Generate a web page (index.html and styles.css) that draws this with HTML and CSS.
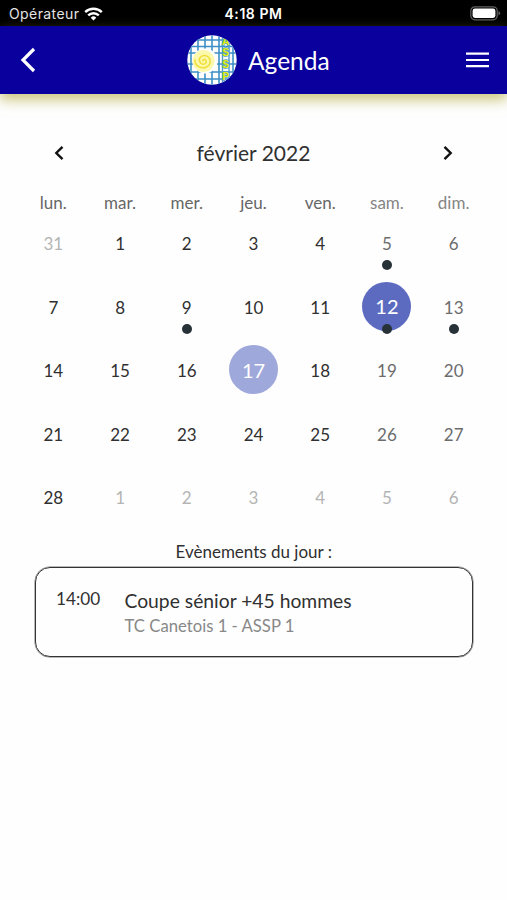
FILE: index.html
```html
<!DOCTYPE html>
<html lang="fr">
<head>
    <meta charset="UTF-8">
    <meta name="viewport" content="width=device-width, initial-scale=1.0">
    <title>Agenda</title>
    <link rel="stylesheet" href="styles.css">
</head>
<body>
    <!-- Status bar -->
    <div class="status-bar">
        <div class="carrier">
            <span>Opérateur</span>
            <svg class="wifi" width="19" height="14" viewBox="0 0 19 14" fill="none" stroke="#fff" stroke-width="2.4">
                <path d="M1.2 5.2a11.8 11.8 0 0 1 16.6 0"/>
                <path d="M4.2 8.4a7.5 7.5 0 0 1 10.6 0"/>
                <path d="M9.5 13.6l-2.8-2.9a4 4 0 0 1 5.6 0z" fill="#fff" stroke="none"/>
            </svg>
        </div>
        <span class="clock">4:18 PM</span>
        <svg class="battery" width="31" height="15" viewBox="0 0 31 15">
            <rect x="0.8" y="0.8" width="26.4" height="13" rx="4" fill="none" stroke="#626262" stroke-width="1.2"/>
            <rect x="2.6" y="2.6" width="22.8" height="9.4" rx="2.4" fill="#fff"/>
            <path d="M28.5 5v4.6q1.7-.8 1.7-2.3T28.5 5z" fill="#626262"/>
        </svg>
    </div>

    <!-- Header -->
    <div class="header">
        <svg class="back" width="16" height="26" viewBox="0 0 16 26" fill="none" stroke="#fff" stroke-width="3.2">
            <path d="M14 2L3 13l11 11"/>
        </svg>
        <div class="brand">
            <svg width="50" height="50" viewBox="0 0 50 50">
                <defs>
                    <clipPath id="round"><circle cx="25" cy="25" r="24.7"/></clipPath>
                </defs>
                <g clip-path="url(#round)">
                    <rect width="50" height="50" fill="#fff"/>
                    <path d="M4 0v50M11 0v50M18 0v50M25 0v50M32 0v50M46 0v50M0 5h50M0 11.500h50M0 18h50M0 29h50M0 37h50M0 44h50" stroke="#3d8fc6" stroke-width="1.6"/>
                    <circle cx="18" cy="26" r="12.5" fill="#fff"/>
                    <circle cx="16.5" cy="26" r="11" fill="#fcf8ae"/>
                    <path d="M16 26.500c-1-2 2-3 3-1 1.500 3-3 5-5.500 2.500-3-3.500 0-8 4.500-7.500 6 1 7 9 1.500 11.500-6 2.500-12-1.500-11.500-7.500" fill="none" stroke="#f0df38" stroke-width="1.5"/>
                    <path d="M35.500 0v50M42 0v50" stroke="#4f9cc4" stroke-width="1.4"/>
                    <g class="logo-text">
                        <text x="38.800" y="9.500">A</text>
                        <text x="38.800" y="21.300">S</text>
                        <text x="38.800" y="33.300">S</text>
                        <text x="38.800" y="45.300">P</text>
                    </g>
                </g>
            </svg>
            <span class="title">Agenda</span>
        </div>
        <svg class="menu" width="23" height="16" viewBox="0 0 23 16" stroke="#fff" stroke-width="2.2">
            <path d="M0 1.700h23M0 8h23M0 14.200h23"/>
        </svg>
    </div>

    <!-- Calendar -->
    <div class="calendar">
        <div class="month">
            <svg width="10" height="16" viewBox="0 0 10 16" fill="none" stroke="#111" stroke-width="2.4">
                <path d="M8.5 1.8L2.3 8l6.200 6.200"/>
            </svg>
            <span>février 2022</span>
            <svg width="10" height="16" viewBox="0 0 10 16" fill="none" stroke="#111" stroke-width="2.4">
                <path d="M1.5 1.8L7.700 8l-6.200 6.200"/>
            </svg>
        </div>
        <div class="weekdays">
            <span>lun.</span>
            <span>mar.</span>
            <span>mer.</span>
            <span>jeu.</span>
            <span>ven.</span>
            <span class="light">sam.</span>
            <span class="light">dim.</span>
        </div>
        <div class="days">
            <div class="day outside">31</div>
            <div class="day">1</div>
            <div class="day">2</div>
            <div class="day">3</div>
            <div class="day">4</div>
            <div class="day weekend event">5</div>
            <div class="day weekend">6</div>

            <div class="day">7</div>
            <div class="day">8</div>
            <div class="day event">9</div>
            <div class="day">10</div>
            <div class="day">11</div>
            <div class="day event"><span class="circle selected">12</span></div>
            <div class="day weekend event">13</div>

            <div class="day">14</div>
            <div class="day">15</div>
            <div class="day">16</div>
            <div class="day"><span class="circle today">17</span></div>
            <div class="day">18</div>
            <div class="day weekend">19</div>
            <div class="day weekend">20</div>

            <div class="day">21</div>
            <div class="day">22</div>
            <div class="day">23</div>
            <div class="day">24</div>
            <div class="day">25</div>
            <div class="day weekend">26</div>
            <div class="day weekend">27</div>

            <div class="day">28</div>
            <div class="day outside">1</div>
            <div class="day outside">2</div>
            <div class="day outside">3</div>
            <div class="day outside">4</div>
            <div class="day outside">5</div>
            <div class="day outside">6</div>
        </div>
    </div>

    <!-- Events -->
    <div class="events">
        <div class="events-title">Evènements du jour :</div>
        <div class="event-card">
            <span class="event-time">14:00</span>
            <div class="event-info">
                <div class="event-name">Coupe sénior +45 hommes</div>
                <div class="event-teams">TC Canetois 1 - ASSP 1</div>
            </div>
        </div>
    </div>
</body>
</html>
```
FILE: styles.css
```css
* {
    box-sizing: border-box;
}
body {
    margin: 0;
    height: 900px;
    background-color: #fefefe;
    color: #303030;
    font-family: Lato, sans-serif;
    overflow: hidden;
}
svg {
    display: block;
}
.status-bar {
    display: grid;
    grid-template-columns: 1fr auto 1fr;
    align-items: center;
    height: 26px;
    padding: 1px 6px 0 9px;
    background-color: #000;
    color: #fff;
    font-family: Inter, sans-serif;
    font-size: 14px;
}
.carrier {
    display: flex;
    align-items: center;
    gap: 5px;
    color: #e4e4e4;
    letter-spacing: 0.4px;
}
.clock {
    margin-right: 3px;
    font-weight: 600;
    letter-spacing: 0.55px;
}
.battery {
    justify-self: end;
}
.header {
    display: flex;
    align-items: center;
    height: 68px;
    padding: 0 18px 0 20px;
    background-color: #0a009e;
    box-shadow: 0 6px 12px rgba(180, 170, 60, 0.65);
}
.brand {
    display: flex;
    align-items: center;
    gap: 11px;
    margin-left: 151px;
}
.menu {
    margin-left: auto;
}
.title {
    color: #fff;
    font-size: 24.5px;
    line-height: 30px;
    padding-top: 1px;
}
.logo-text {
    font-family: "Liberation Sans", sans-serif;
    font-size: 10.3px;
    font-weight: bold;
    fill: #e6f000;
    stroke: #4f9cc4;
    stroke-width: 1.6px;
    paint-order: stroke;
    text-anchor: middle;
}
.calendar {
    padding: 42px 20px 0;
}
.month {
    display: flex;
    align-items: center;
    justify-content: space-between;
    height: 33px;
    padding: 0 34px;
    font-size: 21px;
}
.weekdays {
    display: grid;
    grid-template-columns: repeat(7, 1fr);
    margin-top: 24px;
    height: 18px;
    line-height: 20px;
    font-size: 17px;
    text-align: center;
    color: #666;
}
.light {
    color: #858585;
}
.days {
    display: grid;
    grid-template-columns: repeat(7, 1fr);
    grid-auto-rows: 63.5px;
}
.day {
    position: relative;
    display: flex;
    align-items: center;
    justify-content: center;
    padding-top: 1.5px;
    font-size: 17px;
}
.weekend {
    color: #6c6c6c;
}
.outside {
    color: #b4b4b4;
}
.circle {
    display: flex;
    align-items: center;
    justify-content: center;
    width: 49px;
    height: 49px;
    margin-top: -1.5px;
    border-radius: 50%;
    color: #fff;
    font-size: 20px;
}
.selected {
    background-color: #5c6bc0;
}
.today {
    background-color: #9fa8da;
}
.event::after {
    content: "";
    position: absolute;
    left: 50%;
    bottom: 4.5px;
    width: 10px;
    height: 10px;
    margin-left: -5px;
    border-radius: 50%;
    background-color: #263238;
}
.events {
    padding: 11px 34.5px 0 35px;
}
.events-title {
    line-height: 24px;
    font-size: 17px;
    text-align: center;
}
.event-card {
    display: flex;
    height: 90px;
    margin-top: 3px;
    padding: 19.5px 20px;
    border: 1px solid #333;
    border-radius: 15px;
    box-shadow: 0 0 0 0.5px #777;
}
.event-time {
    width: 68.5px;
    font-size: 17.2px;
    line-height: 23px;
}
.event-name {
    font-size: 19.3px;
    line-height: 27px;
}
.event-teams {
    font-size: 16.7px;
    line-height: 25px;
    color: #888;
}
```
